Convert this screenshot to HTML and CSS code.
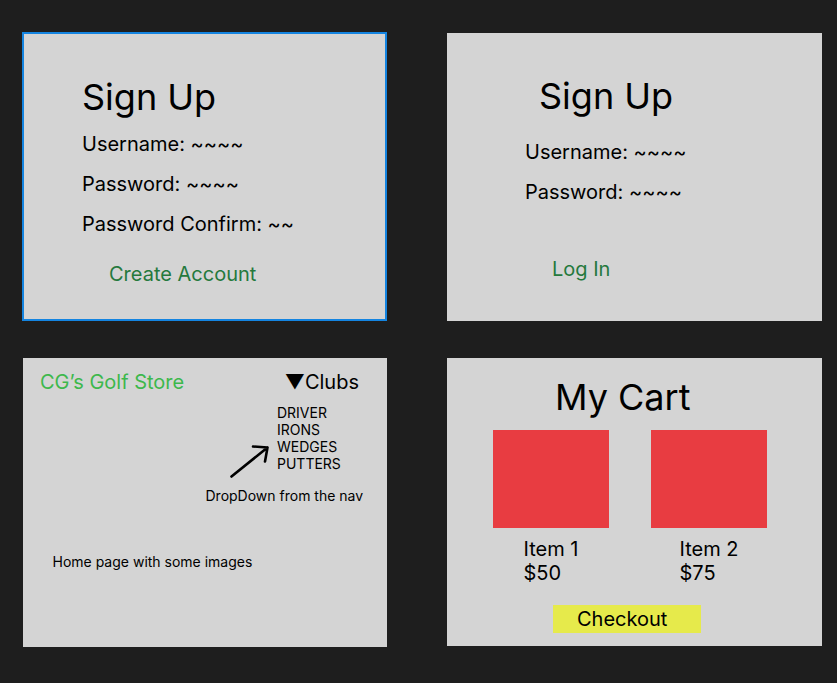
FILE: index.html
```html
<!DOCTYPE html>
<html lang="en">
<head>
<meta charset="utf-8">
<title>Wireframes</title>
<link rel="stylesheet" href="styles.css">
</head>
<body>
<main class="board">
  <section class="frame frame-signup selected">
    <h1 class="title">Sign Up</h1>
    <p class="field f-first">Username: ~~~~</p>
    <p class="field">Password: ~~~~</p>
    <p class="field">Password Confirm: ~~</p>
    <p class="action action-create">Create Account</p>
  </section>

  <section class="frame frame-login">
    <h1 class="title title-login">Sign Up</h1>
    <p class="field f-first-login">Username: ~~~~</p>
    <p class="field">Password: ~~~~</p>
    <p class="action action-login">Log In</p>
  </section>

  <section class="frame frame-home">
    <header class="nav">
      <span class="brand">CG’s Golf Store</span>
      <span class="clubs">▼Clubs</span>
    </header>
    <div class="dropdown-row">
      <svg class="arrow" width="40" height="74" viewBox="0 0 40 74">
        <path d="M1.5 72.5 L37.5 43.5 M23 42.5 L37.5 43.5 L35 57.5" fill="none" stroke="#000" stroke-width="2.6" stroke-linecap="round" stroke-linejoin="round"/>
      </svg>
      <ul class="menu">
        <li>DRIVER</li>
        <li>IRONS</li>
        <li>WEDGES</li>
        <li>PUTTERS</li>
      </ul>
    </div>
    <p class="note note-dropdown">DropDown from the nav</p>
    <p class="note note-home">Home page with some images</p>
  </section>

  <section class="frame frame-cart">
    <h1 class="title title-cart">My Cart</h1>
    <div class="items">
      <div class="item">
        <div class="thumb"></div>
        <div class="item-text"><span>Item 1</span><span>$50</span></div>
      </div>
      <div class="item">
        <div class="thumb"></div>
        <div class="item-text"><span>Item 2</span><span>$75</span></div>
      </div>
    </div>
    <div class="checkout">Checkout</div>
  </section>
</main>
</body>
</html>
```

FILE: styles.css
```css
* { box-sizing: border-box; }

html, body {
  margin: 0;
  padding: 0;
  background: #1e1e1e;
  font-family: Inter, "Noto Sans", "Liberation Sans", sans-serif;
  color: #000;
}

p, h1, ul { margin: 0; padding: 0; }

.board {
  display: grid;
  grid-template-columns: 365px 375px;
  grid-template-rows: 289px 289px;
  column-gap: 60px;
  row-gap: 37px;
  padding: 32px 0 0 22px;
  width: 837px;
  height: 683px;
}

.frame {
  background: #d4d4d4;
  overflow: hidden;
}

.title {
  font-size: 36px;
  font-weight: 400;
  line-height: 44px;
}

.field {
  font-size: 20px;
  line-height: 40px;
}

.action {
  font-size: 20px;
  line-height: 40px;
  color: #25793d;
}

/* Frame 1 */
.selected {
  border: 2px solid #1484e0;
}

.frame-signup {
  padding: 40.5px 0 0 58px;
}

.f-first { margin-top: 5.5px; }

.action-create {
  margin-top: 10px;
  margin-left: 27px;
}

/* Frame 2 */
.frame-login {
  margin-top: 1px;
  height: 288px;
  padding: 41px 0 0 78px;
}

.title-login { margin-left: 14px; }

.f-first-login { margin-top: 14px; }

.action-login {
  margin-top: 36.5px;
  margin-left: 27px;
}

/* Frame 3 */
.frame-home {
  margin-left: 1px;
  padding: 12px 28px 0 17px;
}

.nav {
  display: flex;
  justify-content: space-between;
  align-items: center;
  font-size: 20px;
  line-height: 24px;
}

.brand { color: #3db84c; }

.dropdown-row {
  display: flex;
  align-items: flex-start;
  margin: 9.5px 0 0 190px;
}

.arrow { display: block; flex: none; }

.menu {
  list-style: none;
  margin-left: 7px;
  font-size: 14px;
  line-height: 17px;
}

.note {
  font-size: 14px;
  line-height: 17px;
  white-space: nowrap;
}

.note-dropdown {
  margin-top: 9px;
  margin-left: 165.5px;
}

.note-home {
  margin-top: 49px;
  margin-left: 12.5px;
}

/* Frame 4 */
.frame-cart {
  height: 288px;
  padding: 17px 0 0 0;
}

.title-cart { margin-left: 108px; }

.items {
  display: flex;
  gap: 42px;
  margin: 11px 0 0 46px;
}

.item {
  display: flex;
  flex-direction: column;
  align-items: center;
  width: 116px;
}

.thumb {
  width: 116px;
  height: 98px;
  background: #e83c41;
}

.item-text {
  display: flex;
  flex-direction: column;
  margin-top: 8.5px;
  font-size: 20px;
  line-height: 24px;
}

.checkout {
  width: 148px;
  height: 28px;
  margin: 20.5px 0 0 106px;
  padding-left: 24px;
  background: #e6ea4b;
  font-size: 20px;
  line-height: 28px;
}
```
